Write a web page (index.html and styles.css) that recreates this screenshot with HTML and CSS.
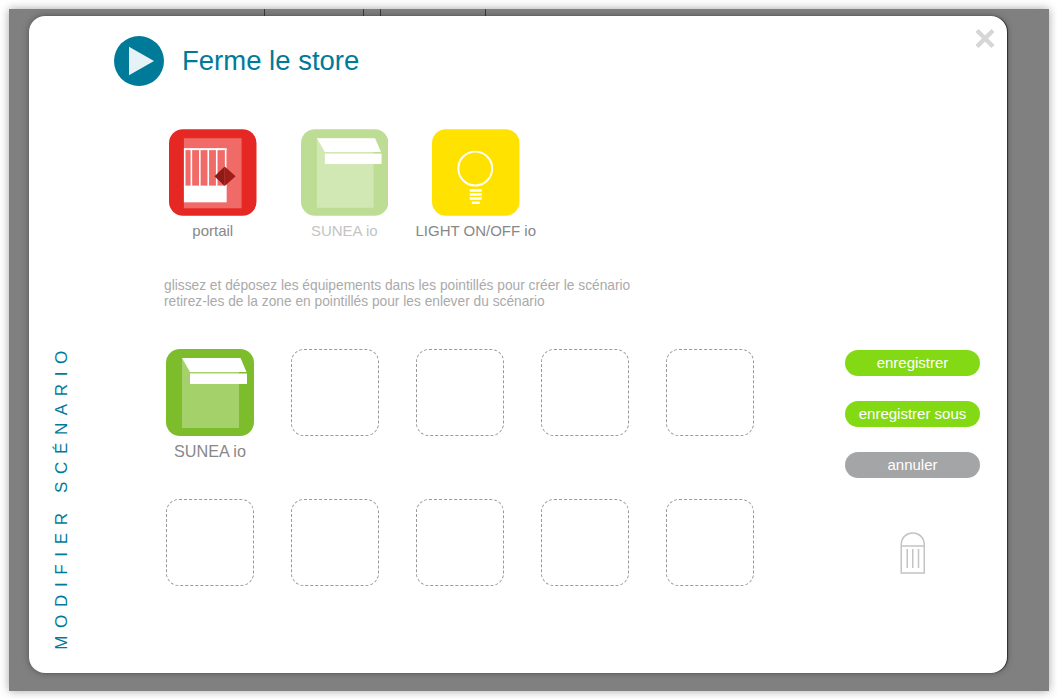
FILE: index.html
```html
<!DOCTYPE html>
<html lang="en">

<head>
  <meta charset="UTF-8">
  <meta name="viewport" content="width=device-width, initial-scale=1.0">
  <title>Modifier scénario</title>
  <link rel="stylesheet" href="styles.css">
</head>

<body>
  <svg class="defs" width="0" height="0">
    <symbol id="sunea" viewBox="0 0 88 87">
      <rect width="88" height="87" rx="14" fill="#7dbc2b" />
      <rect x="16" y="9" width="57" height="70" fill="#a5d16b" />
      <polygon points="16,9 74.5,9 80.5,23 24,23" fill="#fff" />
      <rect x="24" y="24.5" width="57" height="10.5" fill="#fff" />
    </symbol>
  </svg>

  <div class="frame">
    <div class="backdrop-lines">
      <span class="cell-a"></span>
      <span class="cell-b"></span>
      <span class="cell-c"></span>
    </div>

    <div class="modal">
      <svg class="close" width="20" height="19" viewBox="0 0 20 19">
        <path d="M2 1.500 18 17.500M18 1.500 2 17.500" stroke="#d6d6d6" stroke-width="4.400" fill="none" />
      </svg>

      <div class="header">
        <svg width="50" height="50" viewBox="0 0 50 50">
          <circle cx="25" cy="25" r="25" fill="#007a99" />
          <polygon points="15,10.700 40,25 15,39.300" fill="#e6f2f7" />
        </svg>
        <h1>Ferme le store</h1>
      </div>

      <div class="devices">
        <div class="device">
          <svg class="icon" viewBox="0 0 88 87">
            <rect width="88" height="87" rx="14" fill="#e52823" />
            <rect x="15" y="9" width="58" height="70.500" fill="#f06a68" />
            <rect x="15" y="19" width="43" height="2" fill="#fff" />
            <rect x="15" y="56.700" width="43" height="16.800" fill="#fff" />
            <path d="M15.800 20V58M22.500 20V58M31 20V58M39.500 20V58M48 20V58M57 20V58" stroke="#fff" stroke-width="1.600" />
            <polygon points="45.700,47.300 56,37.500 56,57" fill="#8c1a15" />
            <polygon points="56,37.500 67,47.300 56,57" fill="#a01c18" />
          </svg>
          <span>portail</span>
        </div>
        <div class="device off">
          <svg class="icon"><use href="#sunea" /></svg>
          <span>SUNEA io</span>
        </div>
        <div class="device">
          <svg class="icon" viewBox="0 0 88 87">
            <rect width="88" height="87" rx="14" fill="#ffe200" />
            <circle cx="43.500" cy="39.500" r="17" fill="none" stroke="#fff" stroke-width="2" />
            <path d="M38 61.500H50M38 65.500H50M38 69.500H50M40 74H48" stroke="#fff" stroke-width="2.600" />
          </svg>
          <span>LIGHT ON/OFF io</span>
        </div>
      </div>

      <p class="hint">
        glissez et déposez les équipements dans les pointillés pour créer le scénario<br>
        retirez-les de la zone en pointillés pour les enlever du scénario
      </p>

      <div class="editor">
        <div class="rail"><span>MODIFIER SCÉNARIO</span></div>

        <div class="slots">
          <div class="slot-cell">
            <svg class="icon"><use href="#sunea" /></svg>
            <span>SUNEA io</span>
          </div>
          <div class="slot-cell"><div class="slot"></div></div>
          <div class="slot-cell"><div class="slot"></div></div>
          <div class="slot-cell"><div class="slot"></div></div>
          <div class="slot-cell"><div class="slot"></div></div>
          <div class="slot-cell"><div class="slot"></div></div>
          <div class="slot-cell"><div class="slot"></div></div>
          <div class="slot-cell"><div class="slot"></div></div>
          <div class="slot-cell"><div class="slot"></div></div>
          <div class="slot-cell"><div class="slot"></div></div>
        </div>

        <div class="actions">
          <button class="btn">enregistrer</button>
          <button class="btn">enregistrer sous</button>
          <button class="btn btn-grey">annuler</button>
          <svg class="trash" width="26" height="42" viewBox="0 0 26 42">
            <path d="M1.250 41V12.500C1.250 5.500 6.500 1 12.750 1S24.250 5.500 24.250 12.500V41ZM1.250 14H24.250" fill="none" stroke="#c4c4c4" stroke-width="1.500" />
            <path d="M7.250 17V36M12.750 17V36M18.500 17V36" stroke="#c4c4c4" stroke-width="1.500" />
          </svg>
        </div>
      </div>
    </div>
  </div>
</body>

</html>
```

FILE: styles.css
```css
* {
  box-sizing: border-box;
}

html,
body {
  height: 100%;
}

body {
  margin: 0;
  background: #fff;
  overflow: hidden;
  font-family: 'Liberation Sans', Arial, sans-serif;
}

.defs {
  display: block;
  height: 0;
}

.frame {
  width: 1040px;
  height: 682px;
  margin: 9px 0 0 9px;
  padding: 0 42px 0 20px;
  background: #808080;
  box-shadow: 0 0 9px rgba(0, 0, 0, 0.35);
}

.backdrop-lines {
  display: flex;
  height: 7px;
  padding-left: 235px;
}

.backdrop-lines span {
  border-left: 1px solid #3c3c3c;
}

.cell-a {
  width: 99px;
}

.cell-b {
  width: 17px;
}

.cell-c {
  width: 106px;
  border-right: 1px solid #3c3c3c;
}

.modal {
  position: relative;
  width: 978px;
  height: 657px;
  padding-top: 20px;
  background: #fff;
  border-radius: 16px;
  box-shadow: 1px 0 1px rgba(0, 0, 0, 0.6), 0 0 7px rgba(0, 0, 0, 0.35);
}

.close {
  position: absolute;
  top: 13px;
  right: 12px;
}

.header {
  display: flex;
  align-items: center;
  gap: 18px;
  height: 50px;
  margin-left: 85px;
}

.header h1 {
  margin: 0;
  font-size: 27.5px;
  font-weight: normal;
  color: #007a99;
}

.devices {
  display: grid;
  grid-template-columns: repeat(3, 131.5px);
  margin: 43px 0 0 118px;
}

.device {
  display: flex;
  flex-direction: column;
  align-items: center;
  font-size: 15px;
  line-height: 16px;
  color: #888;
}

.device span {
  margin-top: 7px;
  white-space: nowrap;
}

.device .icon {
  width: 87.5px;
}

.device.off {
  color: #c4c4c4;
}

.device.off .icon {
  opacity: 0.5;
}

.icon {
  display: block;
  width: 88px;
  height: 87px;
}

.hint {
  margin: 39px 0 0 135px;
  font-size: 13.75px;
  line-height: 16px;
  color: #aaa;
}

.editor {
  display: flex;
  margin-top: 39px;
  padding-left: 25px;
}

.rail {
  display: flex;
  align-items: flex-end;
  width: 112px;
  height: 301px;
}

.rail span {
  writing-mode: vertical-rl;
  transform: rotate(180deg);
  font-size: 17px;
  line-height: 16px;
  letter-spacing: 7.65px;
  white-space: nowrap;
  color: #007a99;
}

.slots {
  display: grid;
  grid-template-columns: repeat(5, 88px);
  grid-auto-rows: 150px;
  column-gap: 37px;
}

.slot-cell {
  display: flex;
  flex-direction: column;
  align-items: center;
  font-size: 16.2px;
  line-height: 18px;
  color: #888;
}

.slot-cell span {
  margin-top: 6px;
}

.slot {
  width: 88px;
  height: 87px;
  border: 1px dashed #999;
  border-radius: 13px;
}

.actions {
  display: flex;
  flex-direction: column;
  align-items: center;
  gap: 25px;
  width: 135px;
  margin: 1px 0 0 91px;
}

.btn {
  width: 135px;
  height: 26px;
  padding: 0 0 2px;
  border: 0;
  border-radius: 13px;
  background: #84d915;
  font-family: inherit;
  font-size: 15px;
  color: #fff;
}

.btn-grey {
  background: #a4a5a7;
}

.trash {
  margin-top: 29px;
}
```
